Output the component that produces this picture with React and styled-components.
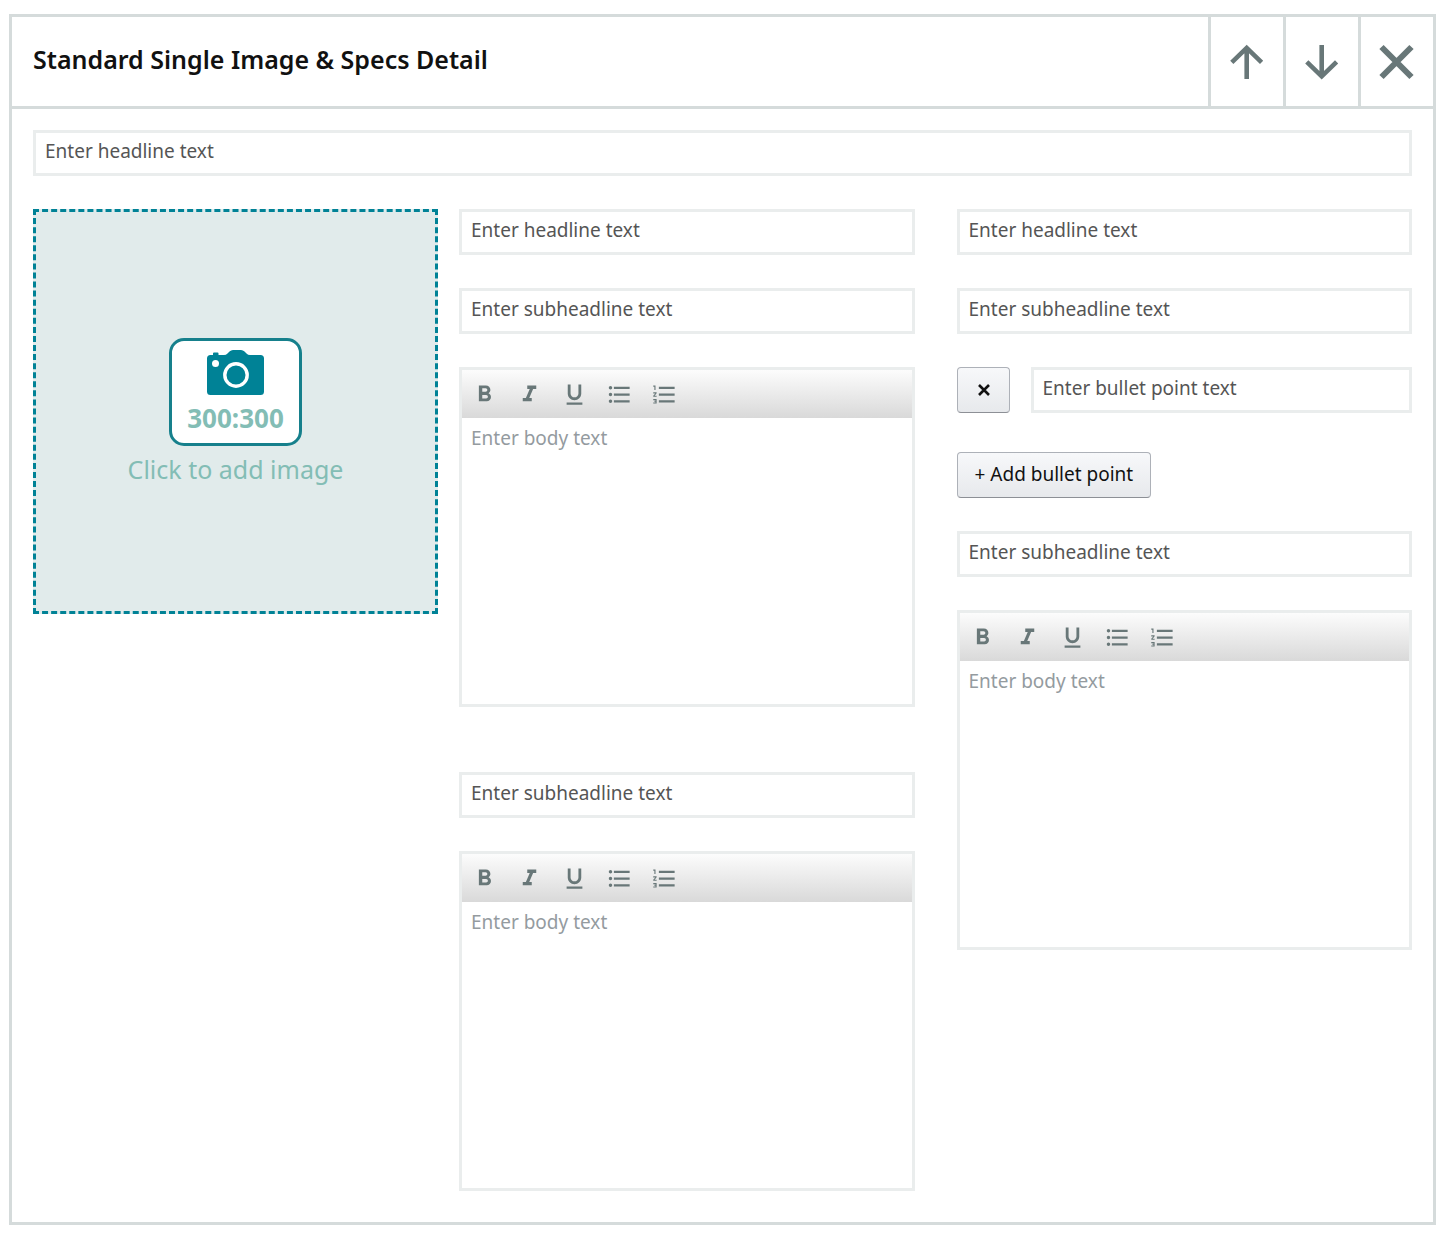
import styled, { createGlobalStyle } from 'styled-components';
import {
  MdFormatBold,
  MdFormatItalic,
  MdFormatUnderlined,
  MdFormatListBulleted,
  MdFormatListNumbered,
} from 'react-icons/md';

const tools = [
  { name: 'Bold', Icon: MdFormatBold },
  { name: 'Italic', Icon: MdFormatItalic },
  { name: 'Underline', Icon: MdFormatUnderlined },
  { name: 'Bulleted list', Icon: MdFormatListBulleted },
  { name: 'Numbered list', Icon: MdFormatListNumbered },
];

function TextField({ placeholder }) {
  return <Input type="text" placeholder={placeholder} aria-label={placeholder} />;
}

function BodyEditor() {
  return (
    <Editor>
      <Toolbar>
        {tools.map(({ name, Icon }) => (
          <ToolButton key={name} type="button" aria-label={name}>
            <Icon size={27} />
          </ToolButton>
        ))}
      </Toolbar>
      <BodyText placeholder="Enter body text" aria-label="Body text" />
    </Editor>
  );
}

function CameraIcon() {
  return (
    <svg width="58" height="46" viewBox="0 0 58 46">
      <path
        fill="#008296"
        d="M3.5 5H6V3.5Q6 2.5 7 2.5H10.5Q11.5 2.5 11.5 3.5V5H17Q19 5 20.5 3.5L22.5 1.5Q24 0 26 0H34Q36 0 37.5 1.5L39.5 3.5Q41 5 43 5H53.5Q57 5 57 8.5V41.5Q57 45 53.5 45H3.5Q0 45 0 41.5V8.5Q0 5 3.5 5Z"
      />
      <circle cx="8.5" cy="13.5" r="3.5" fill="#fff" />
      <circle cx="29" cy="25" r="11.2" fill="none" stroke="#fff" strokeWidth="3.4" />
    </svg>
  );
}

export default function App() {
  return (
    <>
      <GlobalStyle />
      <Page>
        <Module>
          <Header>
            <Title>Standard Single Image &amp; Specs Detail</Title>
            <HeaderButton type="button" aria-label="Move up">
              <svg width="36" height="36" viewBox="0 0 36 36">
                <path d="M17.7 35V3M2.8 18.3L17.7 3.9L32.6 18.3" strokeWidth="4.6" />
              </svg>
            </HeaderButton>
            <HeaderButton type="button" aria-label="Move down">
              <svg width="36" height="36" viewBox="0 0 36 36">
                <path d="M17.7 1V33M2.8 17.9L17.7 32.3L32.6 17.9" strokeWidth="4.6" />
              </svg>
            </HeaderButton>
            <HeaderButton type="button" aria-label="Remove module">
              <svg width="36" height="36" viewBox="0 0 36 36">
                <path d="M2.5 3L32.5 33M32.5 3L2.5 33" strokeWidth="6" />
              </svg>
            </HeaderButton>
          </Header>

          <Content>
            <TextField placeholder="Enter headline text" />
            <Specs>
              <ImagePicker type="button">
                <ImageCard>
                  <CameraIcon />
                  <ImageSize>300:300</ImageSize>
                </ImageCard>
                <ImageHint>Click to add image</ImageHint>
              </ImagePicker>

              <Columns>
                <Column>
                  <TextField placeholder="Enter headline text" />
                  <TextField placeholder="Enter subheadline text" />
                  <BodyEditor />
                  <Section>
                    <TextField placeholder="Enter subheadline text" />
                    <BodyEditor />
                  </Section>
                </Column>

                <Column>
                  <TextField placeholder="Enter headline text" />
                  <TextField placeholder="Enter subheadline text" />
                  <Bullets>
                    <BulletRow>
                      <RemoveButton type="button" aria-label="Remove bullet point">
                        <svg width="14" height="14" viewBox="0 0 14 14">
                          <path d="M3 2L13 12M13 2L3 12" stroke="#111" strokeWidth="2.6" />
                        </svg>
                      </RemoveButton>
                      <TextField placeholder="Enter bullet point text" />
                    </BulletRow>
                    <AddButton type="button">+ Add bullet point</AddButton>
                  </Bullets>
                  <TextField placeholder="Enter subheadline text" />
                  <BodyEditor />
                </Column>
              </Columns>
            </Specs>
          </Content>
        </Module>
      </Page>
    </>
  );
}

const GlobalStyle = createGlobalStyle`
  * {
    box-sizing: border-box;
  }
  body {
    margin: 0;
    background: #fff;
    color: #111;
    font-family: 'Noto Sans', 'Open Sans', sans-serif;
  }
  button, input, textarea {
    margin: 0;
    font-family: inherit;
  }
  button {
    cursor: pointer;
  }
`;

const Page = styled.main`
  padding: 14px 8px 10px 9px;
`;

const Module = styled.section`
  border: 3px solid #d5dbdb;
`;

const Header = styled.header`
  display: flex;
  min-height: 92px;
  border-bottom: 3px solid #d5dbdb;
`;

const Title = styled.h2`
  flex: 1;
  align-self: center;
  margin: 0;
  padding: 0 21px 5px;
  font-size: 25px;
  line-height: 34px;
  font-weight: 600;
`;

const HeaderButton = styled.button`
  display: flex;
  align-items: center;
  justify-content: center;
  width: 75px;
  padding: 0;
  border: 0;
  border-left: 3px solid #d5dbdb;
  background: #fff;

  path {
    fill: none;
    stroke: #687778;
  }
`;

const Content = styled.div`
  display: flex;
  flex-direction: column;
  gap: 33px;
  padding: 21px 21px 31px;
`;

const Specs = styled.div`
  display: grid;
  grid-template-columns: 405fr 953fr;
  gap: 21px;
  align-items: start;
`;

const Columns = styled.div`
  display: grid;
  grid-template-columns: 1fr 1fr;
  gap: 42px;
  align-items: start;
`;

const Column = styled.div`
  display: flex;
  flex-direction: column;
  gap: 33px;
  min-width: 0;
`;

const Section = styled(Column)`
  padding-top: 32px;
`;

const Input = styled.input`
  width: 100%;
  min-width: 0;
  height: 46px;
  padding: 0 9px 4px;
  border: 3px solid #eaeded;
  border-radius: 0;
  background: #fff;
  color: #111;
  font-size: 19px;

  &::placeholder {
    color: #555;
    opacity: 1;
  }
`;

const ImagePicker = styled.button`
  display: flex;
  flex-direction: column;
  align-items: center;
  justify-content: center;
  width: 100%;
  aspect-ratio: 1;
  padding: 0;
  border: 3px dashed #008296;
  background: #e1ebeb;
`;

const ImageCard = styled.span`
  display: flex;
  flex-direction: column;
  align-items: center;
  width: 133px;
  height: 108px;
  padding-top: 9px;
  border: 3px solid #16808c;
  border-radius: 15px;
  background: #fff;
`;

const ImageSize = styled.span`
  color: #83bdb5;
  font-size: 26px;
  line-height: 44px;
  font-weight: 700;
`;

const ImageHint = styled.span`
  padding-top: 6px;
  color: #83bdb5;
  font-size: 25px;
  line-height: 34px;
`;

const Editor = styled.div`
  border: 3px solid #eaeded;
`;

const Toolbar = styled.div`
  display: flex;
  height: 48px;
  background: linear-gradient(#fcfcfc, #d9d9d9);
`;

const ToolButton = styled.button`
  display: flex;
  align-items: center;
  justify-content: center;
  width: 45px;
  padding: 0;
  border: 0;
  background: none;
  color: #687778;
`;

const BodyText = styled.textarea`
  display: block;
  width: 100%;
  height: 286px;
  padding: 6px 9px;
  border: 0;
  background: #fff;
  color: #111;
  font-size: 19px;
  line-height: 28px;
  resize: none;

  &::placeholder {
    color: #949b9f;
    opacity: 1;
  }
`;

const Bullets = styled.div`
  display: flex;
  flex-direction: column;
  align-items: flex-start;
  gap: 39px;
`;

const BulletRow = styled.div`
  display: flex;
  gap: 21px;
  width: 100%;
`;

const SecondaryButton = styled.button`
  height: 46px;
  border: 1px solid #adb1b8;
  border-bottom-color: #8d9096;
  border-radius: 4px;
  background: linear-gradient(#f7f8fa, #e7e9ec);
  color: #111;
`;

const RemoveButton = styled(SecondaryButton)`
  display: flex;
  flex-shrink: 0;
  align-items: center;
  justify-content: center;
  width: 53px;
  padding: 0;
`;

const AddButton = styled(SecondaryButton)`
  padding: 0 17px 3px;
  font-size: 19px;
`;
